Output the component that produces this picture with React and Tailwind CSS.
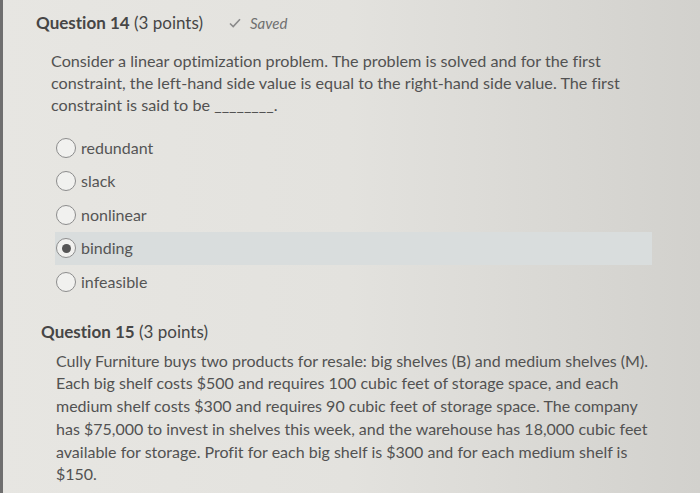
import React from "react";

const options = ["redundant", "slack", "nonlinear", "binding", "infeasible"];

function Radio({ checked }) {
  return (
    <span className="flex h-[20px] w-[20px] shrink-0 items-center justify-center rounded-full border-[1.5px] border-[#8c8c8c] bg-[#f1f1ef]">
      {checked && <span className="h-[9px] w-[9px] rounded-full bg-[#555]" />}
    </span>
  );
}

export default function App() {
  return (
    <div
      className="flex h-[493px] w-[700px] overflow-hidden bg-gradient-to-r from-[#e7e6e2] via-[#e3e2de] to-[#d2d1cd] text-[#4f4f4f] [font-variant-ligatures:none]"
      style={{ fontFamily: "Lato, 'Open Sans', sans-serif" }}
    >
      <div className="w-[3px] shrink-0 bg-[#6f6f6f]" />
      <div className="flex flex-1 flex-col">
        <div className="flex items-center pl-[33px] pt-[12px] leading-[22px]">
          <span className="text-[17px] text-[#464646]">
            <span className="font-bold">Question 14</span> (3 points)
          </span>
          <span className="ml-[26px] flex items-center gap-[9px] text-[15px] italic text-[#707070]">
            <svg width="12" height="10" viewBox="0 0 12 10" fill="none">
              <path d="M1 5.5 L4.2 8.5 L11 1.2" stroke="#8a8a8a" strokeWidth="1.6" />
            </svg>
            Saved
          </span>
        </div>
        <p className="mt-[16px] pl-[48px] text-[16.2px] leading-[22px] text-[#525252]">
          Consider a linear optimization problem. The problem is solved and for the first
          <br />
          constraint, the left-hand side value is equal to the right-hand side value. The first
          <br />
          constraint is said to be ________.
        </p>
        <div className="mt-[15px] ml-[52px] flex w-[597px] flex-col">
          {options.map((o) => (
            <div
              key={o}
              className={`flex h-[33.5px] items-center gap-[5px] pl-[1px] text-[16px] ${
                o === "binding" ? "bg-[#d9dddd]" : ""
              }`}
            >
              <Radio checked={o === "binding"} />
              <span className="text-[#555]">{o}</span>
            </div>
          ))}
        </div>
        <div className="mt-[22px] pl-[38px] text-[17px] leading-[22px] text-[#464646]">
          <span className="font-bold">Question 15</span> (3 points)
        </div>
        <p className="mt-[7px] pl-[53px] text-[16px] leading-[22.8px] text-[#525252]">
          Cully Furniture buys two products for resale: big shelves (B) and medium shelves (M).
          <br />
          Each big shelf costs $500 and requires 100 cubic feet of storage space, and each
          <br />
          medium shelf costs $300 and requires 90 cubic feet of storage space. The company
          <br />
          has $75,000 to invest in shelves this week, and the warehouse has 18,000 cubic feet
          <br />
          available for storage. Profit for each big shelf is $300 and for each medium shelf is
          <br />
          $150.
        </p>
      </div>
    </div>
  );
}
